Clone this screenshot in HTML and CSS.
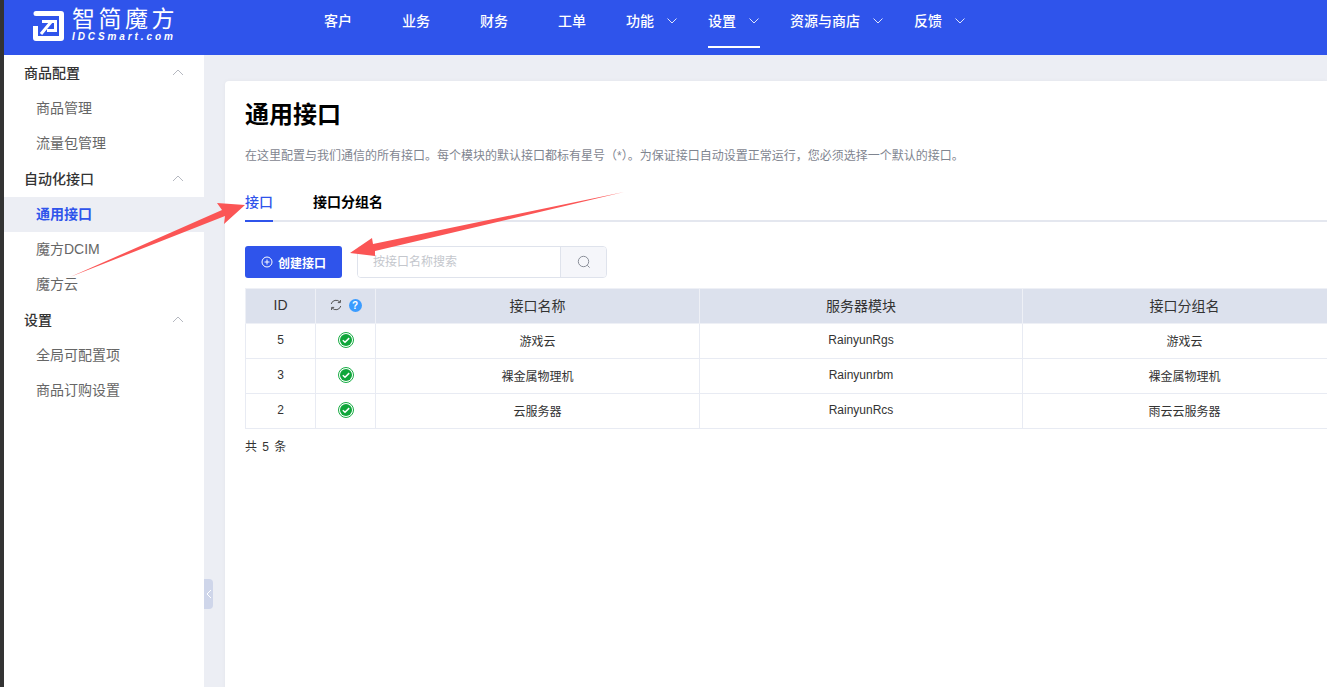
FILE: index.html
```html
<!DOCTYPE html>
<html>
<head>
<title>通用接口</title>
<meta charset="utf-8">
<link rel="stylesheet" href="styles.css">
</head>
<body>
<div class="app">
  <div class="topbar">
    <div class="logo">
      <svg class="logo-mark" width="31" height="30" viewBox="0 0 31 30">
        <path fill="#fff" d="M3 0H28a3 3 0 0 1 3 3V27a3 3 0 0 1-3 3H3a3 3 0 0 1-3-3V15H5V25H26V5H3a2.500 2.500 0 0 1 0-5Z"/>
        <path fill="none" stroke="#fff" stroke-width="3" d="M9 10.500H22.500V19.500H14M18 11L8 23"/>
      </svg>
      <div class="logo-text">
        <div class="logo-cn">智简魔方</div>
        <div class="logo-en">IDCSmart.com</div>
      </div>
    </div>
    <ul class="nav">
      <li class="nav-item plain">客户</li>
      <li class="nav-item plain">业务</li>
      <li class="nav-item plain">财务</li>
      <li class="nav-item plain last-plain">工单</li>
      <li class="nav-item">功能<svg class="caret" width="10" height="6" viewBox="0 0 10 6"><path d="M.5 .5L5 5 9.500 .5" /></svg></li>
      <li class="nav-item active">设置<svg class="caret" width="10" height="6" viewBox="0 0 10 6"><path d="M.5 .5L5 5 9.500 .5" /></svg></li>
      <li class="nav-item">资源与商店<svg class="caret" width="10" height="6" viewBox="0 0 10 6"><path d="M.5 .5L5 5 9.500 .5" /></svg></li>
      <li class="nav-item">反馈<svg class="caret" width="10" height="6" viewBox="0 0 10 6"><path d="M.5 .5L5 5 9.500 .5" /></svg></li>
    </ul>
  </div>

  <div class="body-row">
    <div class="sidebar">
      <div class="side-group">商品配置<svg class="side-caret" width="12" height="7" viewBox="0 0 12 7"><path d="M1 6l5-5 5 5" /></svg></div>
      <div class="side-link">商品管理</div>
      <div class="side-link">流量包管理</div>
      <div class="side-group">自动化接口<svg class="side-caret" width="12" height="7" viewBox="0 0 12 7"><path d="M1 6l5-5 5 5" /></svg></div>
      <div class="side-link current">通用接口</div>
      <div class="side-link">魔方DCIM</div>
      <div class="side-link">魔方云</div>
      <div class="side-group">设置<svg class="side-caret" width="12" height="7" viewBox="0 0 12 7"><path d="M1 6l5-5 5 5" /></svg></div>
      <div class="side-link">全局可配置项</div>
      <div class="side-link">商品订购设置</div>
    </div>

    <div class="main">
      <div class="collapse-tab">
        <svg width="6" height="10" viewBox="0 0 6 10"><path d="M5 1L1 5l4 4" /></svg>
      </div>
      <div class="card">
        <h1>通用接口</h1>
        <p class="desc">在这里配置与我们通信的所有接口。每个模块的默认接口都标有星号（*）。为保证接口自动设置正常运行，您必须选择一个默认的接口。</p>

        <div class="tabs">
          <div class="tab active">接口</div>
          <div class="tab">接口分组名</div>
        </div>

        <div class="toolbar">
          <button class="btn-primary">
            <svg width="12" height="12" viewBox="0 0 12 12"><circle cx="6" cy="6" r="5"/><path d="M6 3.500v5M3.500 6h5"/></svg>
            创建接口
          </button>
          <div class="search">
            <input type="text" placeholder="按接口名称搜索">
            <div class="search-btn">
              <svg width="14" height="14" viewBox="0 0 14 14"><circle cx="6.500" cy="6.500" r="5.200"/><path d="M10.300 10.300L12.600 12.600"/></svg>
            </div>
          </div>
        </div>

        <table class="grid">
          <colgroup>
            <col class="c-id"><col class="c-status"><col class="c-name"><col class="c-module"><col class="c-name">
          </colgroup>
          <thead>
            <tr>
              <th>ID</th>
              <th>
                <span class="status-head">
                  <svg class="refresh" width="12" height="12" viewBox="0 0 12 12"><path d="M1.200 5A5 5 0 0 1 10 3.200M10.800 7A5 5 0 0 1 2 8.800"/><path d="M10.400 1v2.600H7.800M1.600 11V8.400h2.600"/></svg>
                  <span class="help">?</span>
                </span>
              </th>
              <th>接口名称</th>
              <th>服务器模块</th>
              <th>接口分组名</th>
            </tr>
          </thead>
          <tbody>
            <tr>
              <td>5</td>
              <td><svg class="ok" width="16" height="16" viewBox="0 0 16 16"><circle class="ok-ring" cx="8" cy="8" r="7.500"/><circle class="ok-fill" cx="8" cy="8" r="6"/><path class="ok-tick" d="M4.800 8.200l2.200 2.100 4.200-4.200"/></svg></td>
              <td>游戏云</td>
              <td>RainyunRgs</td>
              <td>游戏云</td>
            </tr>
            <tr>
              <td>3</td>
              <td><svg class="ok" width="16" height="16" viewBox="0 0 16 16"><circle class="ok-ring" cx="8" cy="8" r="7.500"/><circle class="ok-fill" cx="8" cy="8" r="6"/><path class="ok-tick" d="M4.800 8.200l2.200 2.100 4.200-4.200"/></svg></td>
              <td>裸金属物理机</td>
              <td>Rainyunrbm</td>
              <td>裸金属物理机</td>
            </tr>
            <tr>
              <td>2</td>
              <td><svg class="ok" width="16" height="16" viewBox="0 0 16 16"><circle class="ok-ring" cx="8" cy="8" r="7.500"/><circle class="ok-fill" cx="8" cy="8" r="6"/><path class="ok-tick" d="M4.800 8.200l2.200 2.100 4.200-4.200"/></svg></td>
              <td>云服务器</td>
              <td>RainyunRcs</td>
              <td>雨云云服务器</td>
            </tr>
          </tbody>
        </table>
        <div class="total">共 5 条</div>
      </div>
    </div>
  </div>
</div>

<!-- annotation arrows drawn over the page -->
<svg class="arrows" width="1327" height="687" viewBox="0 0 1327 687">
  <polygon points="70,277 222,210 217,203 245,205 224,224 225,216"/>
  <polygon points="624,192 373,244 372,238 350,253 375,256 375,251"/>
</svg>
</body>
</html>
```

FILE: styles.css
```css
* { box-sizing: border-box; }
html, body { margin: 0; height: 100%; overflow: hidden; }
body { font-family: "Liberation Sans", "Noto Sans CJK SC", sans-serif; background-color: #333; color: #333; font-size: 12px; }
.app { margin-left: 4px; height: 687px; display: flex; flex-direction: column; }

.topbar { height: 55px; background-color: #2f54eb; display: flex; flex-shrink: 0; color: #fff; }
.logo { width: 300px; padding: 7px 0 0 29px; display: flex; gap: 8px; }
.logo-mark { margin-top: 4px; }
.logo-cn { font-size: 23px; line-height: 25px; letter-spacing: 3.5px; font-weight: 400; white-space: nowrap; }
.logo-en { font-size: 10px; line-height: 10px; font-weight: bold; font-style: italic; letter-spacing: 2.9px; white-space: nowrap; }
.nav { list-style: none; margin: 0; padding: 0; display: flex; }
.nav-item { height: 48px; padding-top: 12px; margin-right: 30px; font-size: 14px; line-height: 18px; font-weight: 500; white-space: nowrap; }
.nav-item.plain { width: 78px; margin-right: 0; padding-left: 20px; }
.nav-item.last-plain { margin-right: 10px; }
.nav-item.active { border-bottom: 2px solid #fff; }
.caret { margin: 0 1px 0 13px; vertical-align: 2px; }
.caret path { fill: none; stroke: #dfe5fb; stroke-width: 1; }

.body-row { flex: 1; display: flex; min-height: 0; }
.sidebar { width: 200px; background-color: #fff; flex-shrink: 0; }
.side-group { height: 36px; padding: 0 20px 2px; display: flex; align-items: center; justify-content: space-between; font-size: 14px; font-weight: 500; color: #333; }
.side-link { height: 35px; line-height: 35px; padding-left: 32px; font-size: 14px; color: #666; }
.side-link.current { background-color: #eceef4; color: #2f54eb; font-weight: 700; }
.side-caret path { fill: none; stroke: #b5b8c0; stroke-width: 1; }

.main { flex: 1; min-width: 0; background-color: #eceef4; padding: 26px 0 0 21px; position: relative; }
.collapse-tab { position: absolute; left: 0; top: 524px; width: 9px; height: 30px; background-color: #cfd6ea; border-radius: 0 4px 4px 0; display: flex; align-items: center; justify-content: center; }
.collapse-tab path { fill: none; stroke: #fff; stroke-width: 1; }

.card { background-color: #fff; border-radius: 4px 0 0 0; height: 620px; padding: 17px 0 0 20px; overflow: hidden; box-shadow: 0 0 4px rgba(0,0,0,0.04); }
h1 { margin: 0; font-size: 24px; line-height: 34px; font-weight: 700; color: #000; }
.desc { margin: 15px 0 0; font-size: 12px; line-height: 18px; color: #7f8590; white-space: nowrap; }

.tabs { margin-top: 17px; display: flex; gap: 40px; border-bottom: 2px solid #e4e7ef; height: 40px; }
.tab { font-size: 14px; line-height: 28px; height: 40px; padding-top: 6px; font-weight: 700; color: #000; }
.tab.active { color: #2f54eb; font-weight: 500; border-bottom: 2px solid #2f54eb; }

.toolbar { margin-top: 24px; display: flex; gap: 15px; height: 32px; }
.btn-primary { width: 97px; height: 32px; background-color: #2f54eb; border: 0; border-radius: 3px; color: #fff; font-family: inherit; font-size: 12px; font-weight: 700; display: flex; align-items: center; justify-content: center; gap: 5px; padding: 0; }
.btn-primary svg { fill: none; stroke: #fff; stroke-width: 1; }
.search { width: 250px; height: 32px; display: flex; border: 1px solid #dfe3ec; border-radius: 4px; overflow: hidden; }
.search input { flex: 1; min-width: 0; border: 0; outline: none; padding: 0 15px; font-family: inherit; font-size: 12px; }
.search input::placeholder { color: #c4c7cd; }
.search-btn { width: 46px; background-color: #f5f6fa; border-left: 1px solid #dfe3ec; display: flex; align-items: center; justify-content: center; }
.search-btn svg { fill: none; stroke: #8a8f99; stroke-width: 1; }

.grid { margin-top: 10px; border-collapse: collapse; table-layout: fixed; width: 1101px; }
.c-id { width: 70px; }
.c-status { width: 60px; }
.c-name { width: 324px; }
.c-module { width: 323px; }
.grid th, .grid td { border: 1px solid #e8ebf3; text-align: center; padding: 0 0 2px; }
.grid th { height: 35px; background-color: #dce1ed; font-size: 14px; font-weight: 400; color: #333; border-color: #eef0f6; }
.grid td { height: 35px; font-size: 12px; color: #333; }
.grid td svg { display: block; margin: 0 auto; }
.status-head { display: flex; align-items: center; justify-content: center; gap: 7px; }
.refresh { fill: none; stroke: #555; stroke-width: 1; }
.help { width: 13px; height: 13px; border-radius: 50%; background-color: #3b9cff; color: #fff; font-size: 10px; line-height: 13px; font-weight: 700; text-align: center; }
.ok-ring { fill: #fff; stroke: #18ad44; stroke-width: 1; }
.ok-fill { fill: #0fa63a; }
.ok-tick { fill: none; stroke: #fff; stroke-width: 1.5; }
.total { margin-top: 9px; font-size: 12px; line-height: 18px; letter-spacing: 1px; }

.arrows { position: absolute; left: 0; top: 0; pointer-events: none; }
.arrows polygon { fill: #fb5555; }
```
